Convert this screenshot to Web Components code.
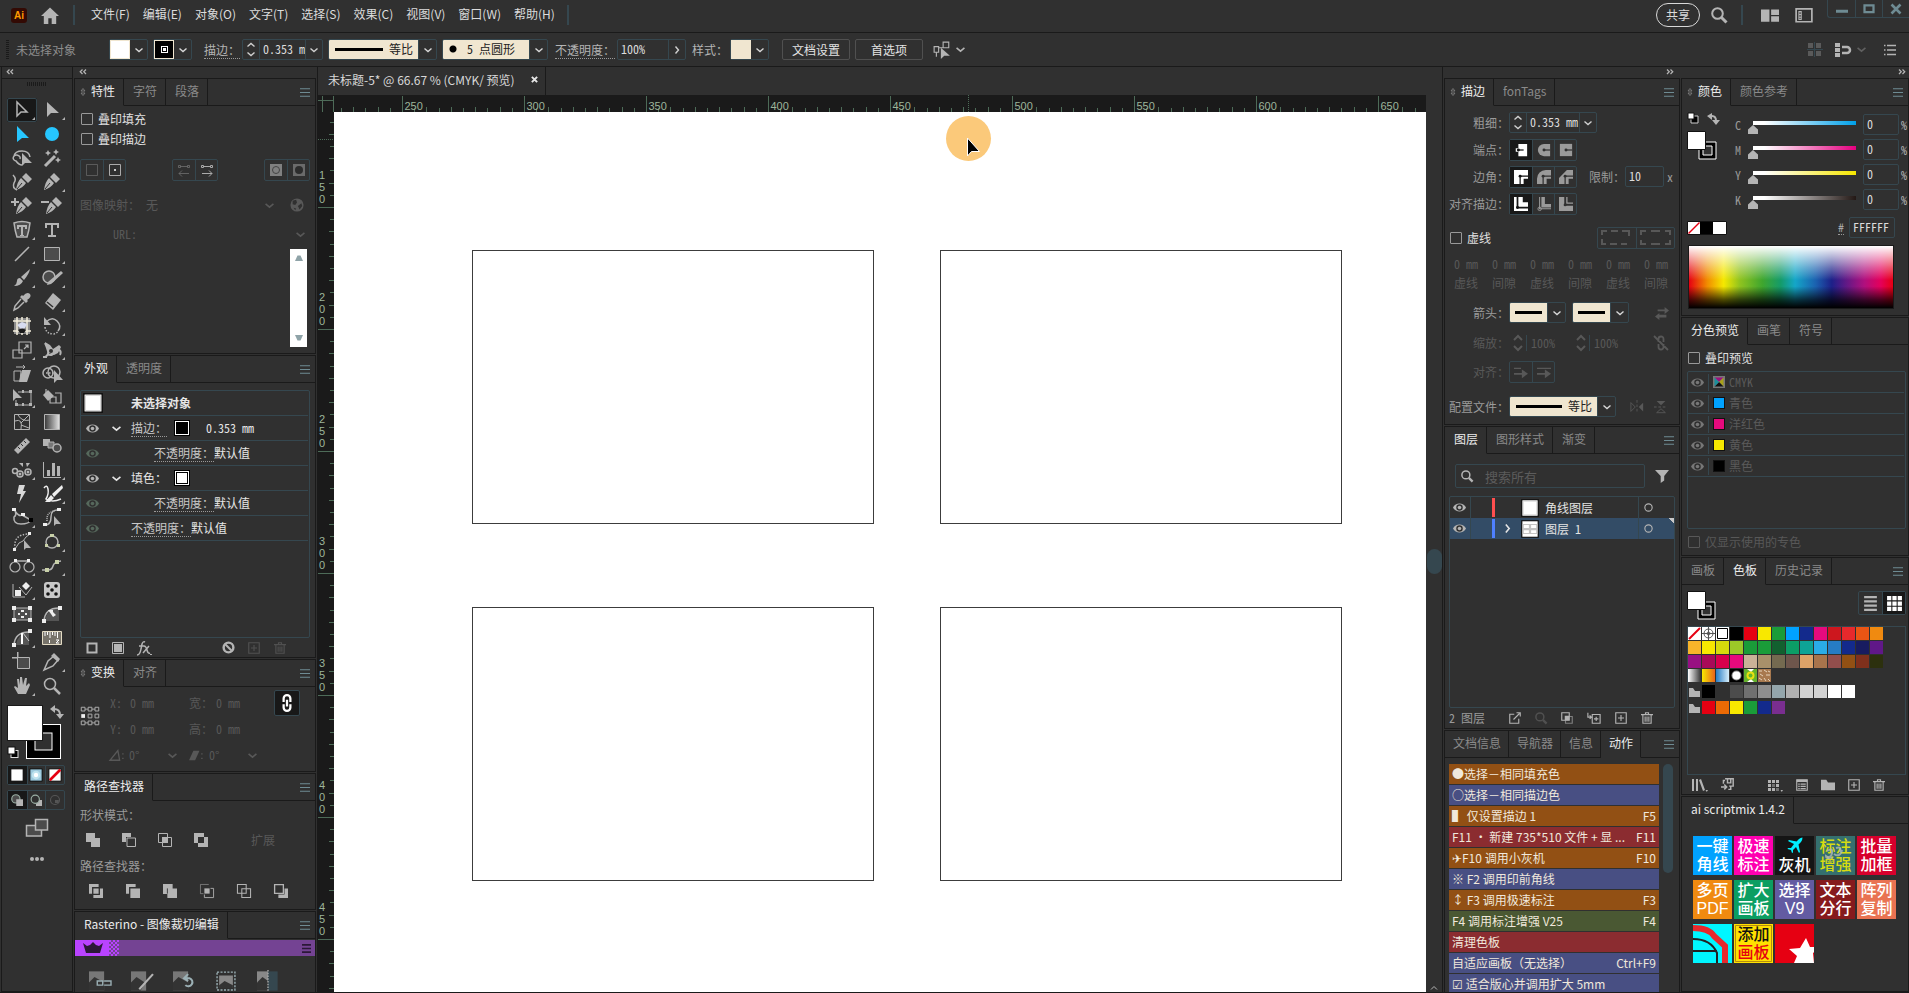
<!DOCTYPE html>
<html lang="zh-CN">
<head>
<meta charset="utf-8">
<title>未标题-5* @ 66.67 % (CMYK/ 预览)</title>
<style>
  html, body {
    margin: 0;
    height: 100%;
    overflow: hidden;
  }

  body {
    --bg: #303030;
    --dark: #1a1a1a;
    --line: #35474f;
    --cream: #f0e6d0;
    --mono: "Noto Sans Mono CJK SC", "Noto Sans CJK SC", monospace;
    background: var(--bg);
    color: #b4b4b4;
    font: 12px/20px "Noto Sans CJK SC", sans-serif;
  }
</style>
</head>
<body>

<template id="app-window-template">
  <style>
    :host {
      display: flex;
      flex-direction: column;
      height: 100vh;
    }

    main {
      flex: 1;
      display: flex;
      gap: 1px;
      min-height: 0;
      padding-left: 1px;
      border-bottom: 1px solid var(--dark);
    }

    document-view {
      flex: 1;
    }
  </style>
  <menu-bar></menu-bar>
  <options-bar></options-bar>
  <main>
    <tool-box></tool-box>
    <left-dock></left-dock>
    <document-view></document-view>
    <stroke-dock></stroke-dock>
    <color-dock></color-dock>
  </main>
</template>

<template id="menu-bar-template">
  <style>
    :host {
      display: flex;
      align-items: flex-start;
      height: 32px;
      border-bottom: 1px solid var(--dark);
      padding-left: 11px;
    }

    .logo {
      width: 16px;
      height: 15px;
      margin: 8px 14px 0 0;
      border-radius: 3px;
      background: #330a04;
      color: #ff9a00;
      font: bold 10px/15px "Liberation Sans", sans-serif;
      text-align: center;
    }

    .rule {
      width: 2px;
      height: 20px;
      margin-top: 5px;
      background: var(--line);
    }

    nav {
      display: flex;
      gap: 13px;
      margin: 4px 12px 0 16px;
    }

    button {
      background: none;
      border: 0;
      padding: 0;
      color: #dcdcdc;
      font: inherit;
      white-space: nowrap;
    }

    .home {
      margin: 7px 14px 0 0;
      height: 18px;
      color: #b4b4b4;
      line-height: 0;
    }

    .right {
      display: flex;
      align-items: flex-start;
      margin-left: auto;
    }

    .share {
      width: 44px;
      height: 24px;
      margin: 3px 11px 0 0;
      border: 1px solid #d8d8d8;
      border-radius: 12px;
    }

    .right .tool {
      height: 18px;
      margin-top: 6px;
      color: #b4b4b4;
      line-height: 0;
    }

    .controls {
      display: flex;
      border: 1px solid var(--line);
      border-width: 0 0 1px 1px;
      border-radius: 0 0 0 3px;
      margin-left: 14px;
    }

    .controls button {
      width: 27px;
      height: 17px;
      color: #6e8b93;
      line-height: 0;
    }

    .controls button + button {
      border-left: 1px solid var(--line);
    }
  </style>
  <span class="logo">Ai</span>
  <button class="home" aria-label="主页"><ui-icon name="home" size="18"></ui-icon></button>
  <span class="rule"></span>
  <nav>
    <button>文件(F)</button>
    <button>编辑(E)</button>
    <button>对象(O)</button>
    <button>文字(T)</button>
    <button>选择(S)</button>
    <button>效果(C)</button>
    <button>视图(V)</button>
    <button>窗口(W)</button>
    <button>帮助(H)</button>
  </nav>
  <span class="rule"></span>
  <div class="right">
    <button class="share">共享</button>
    <button class="tool" aria-label="搜索"><ui-icon name="search" size="16"></ui-icon></button>
    <span class="rule" style="margin-left: 14px; margin-right: 18px"></span>
    <button class="tool" aria-label="排列文档"><ui-icon name="arrange" size="18"></ui-icon></button>
    <button class="tool" aria-label="工作区" style="margin-left: 16px"><ui-icon name="workspace" size="18"></ui-icon></button>
    <div class="controls">
      <button aria-label="最小化"><ui-icon name="minimise" size="12"></ui-icon></button>
      <button aria-label="最大化"><ui-icon name="maximise" size="12"></ui-icon></button>
      <button aria-label="关闭"><ui-icon name="close" size="12"></ui-icon></button>
    </div>
  </div>
</template>

<template id="options-bar-template">
  <style>
    :host {
      display: flex;
      align-items: center;
      height: 33px;
      padding: 0 13px 0 6px;
      border-bottom: 1px solid var(--dark);
      white-space: nowrap;
    }

    .grip {
      width: 3px;
      height: 20px;
      margin-right: 7px;
      background: repeating-linear-gradient(#1a1a1a 0 1px, transparent 1px 2px);
    }

    .state {
      width: 93px;
      color: #8c8c8c;
    }

    .label {
      line-height: 17px;
      margin: 0 2px 0 13px;
      font-family: var(--mono);
    }

    .label.dotted {
      border-bottom: 1px dotted #999;
    }

    pick-list, num-box, .btn {
      margin-right: 5px;
    }

    .btn {
      width: 68px;
      height: 21px;
      padding: 0;
      border: 1px solid #505050;
      border-radius: 2px;
      background: none;
      color: #e4e4e4;
      font: inherit;
      line-height: 18px;
    }

    .right {
      display: flex;
      align-items: center;
      margin-left: auto;
    }
  </style>
  <span class="grip"></span>
  <span class="state">未选择对象</span>
  <swatch-button color="#fff"></swatch-button>
  <swatch-button color="#000" ring></swatch-button>
  <span class="label dotted" style="margin-left: 7px">描边：</span>
  <num-box value="0.353 mm" label="描边粗细" spin drop style="width: 81px"></num-box>
  <pick-list value="等比" label="变量宽度配置文件" kind="line" style="width: 109px"></pick-list>
  <pick-list value="5 点圆形" label="画笔定义" kind="dot" style="width: 106px"></pick-list>
  <span class="label dotted" style="margin-left: 2px">不透明度：</span>
  <num-box value="100%" label="不透明度" next style="width: 69px"></num-box>
  <span class="label" style="margin-left: 1px">样式：</span>
  <swatch-button color="#f0e6d0"></swatch-button>
  <button class="btn" style="margin-left: 8px">文档设置</button>
  <button class="btn">首选项</button>
  <ui-icon name="select-similar" size="18" style="margin-left: 5px"></ui-icon>
  <ui-icon name="chevron" size="9" style="margin-left: 5px"></ui-icon>
  <div class="right">
    <ui-icon name="grid-snap" size="16" style="color: #5a5a5a; margin-right: 12px"></ui-icon>
    <ui-icon name="magnet" size="16"></ui-icon>
    <ui-icon name="chevron" size="9" style="color: #606060; margin: 0 18px 0 6px"></ui-icon>
    <ui-icon name="list" size="12"></ui-icon>
  </div>
</template>

<template id="tool-box-template">
  <style>
    :host {
      box-sizing: border-box;
      width: 72px;
      border: 1px solid var(--dark);
      border-top: 0;
    }

    .strip {
      display: block;
      height: 11px;
      border-bottom: 1px solid var(--dark);
      padding-left: 4px;
      line-height: 0;
    }

    .grip {
      width: 20px;
      height: 4px;
      margin: 3px auto 12px 25px;
      background: repeating-linear-gradient(90deg, #1a1a1a 0 1px, transparent 1px 2px);
    }

    .tools {
      display: grid;
      grid-template-columns: 30px 30px;
      margin-left: 5px;
    }

    button {
      padding: 0;
      border: 0;
      background: none;
      color: #b4b4b4;
      line-height: 0;
    }

    .tools button {
      box-sizing: border-box;
      height: 24px;
    }

    .tools .on {
      background: #181818;
      outline: 1px solid var(--line);
      outline-offset: -1px;
      border-radius: 2px;
    }

    .tools svg {
      width: 30px;
      height: 24px;
      fill: currentColor;
    }

    .s {
      fill: none;
      stroke: currentColor;
      stroke-width: 1.5;
    }

    .proxy {
      display: block;
      margin: 7px 0 6px 5px;
    }

    .modes {
      display: grid;
      grid-template-columns: repeat(3, 1fr);
      width: 56px;
      margin: 0 0 5px 5px;
      border: 1px solid var(--line);
      border-radius: 2px;
    }

    .modes button {
      height: 18px;
    }

    .modes button + button {
      border-left: 1px solid var(--line);
    }

    .modes .on {
      background: #181818;
    }

    .foot {
      display: flex;
      flex-direction: column;
      align-items: center;
      gap: 12px;
    }
  </style>
  <span class="strip"><ui-icon name="collapse-left" size="8"></ui-icon></span>
  <div class="grip"></div>
  <div class="tools"></div>
  <svg class="proxy" width="60" height="54" viewBox="0 0 60 54">
    <rect x="19.500" y="19.500" width="34" height="34" fill="#000" stroke="#fff"/>
    <rect x="28" y="28" width="17" height="17" fill="#303030" stroke="#fff"/>
    <rect x=".5" y=".5" width="35" height="35" fill="#fff" stroke="#1a1a1a"/>
    <path d="M47 4q6 0 6 6" fill="none" stroke="#b4b4b4" stroke-width="2"/>
    <path d="M43 4l5-4v8zM49 9h8l-4 5z" fill="#b4b4b4"/>
    <rect x="4" y="45.500" width="7" height="7" fill="#000" stroke="#ddd"/>
    <rect x="1" y="42" width="7" height="7" fill="#fff" stroke="#111"/>
  </svg>
  <div class="modes">
    <button class="on" aria-label="颜色"><ui-icon name="sw-white" size="14"></ui-icon></button>
    <button aria-label="渐变"><ui-icon name="sw-gradient" size="14"></ui-icon></button>
    <button aria-label="无"><ui-icon name="sw-none" size="14"></ui-icon></button>
  </div>
  <div class="modes">
    <button class="on" aria-label="正常绘图"><ui-icon name="draw-normal" size="12"></ui-icon></button>
    <button aria-label="背面绘图"><ui-icon name="draw-behind" size="12"></ui-icon></button>
    <button aria-label="内部绘图" style="color: #555"><ui-icon name="draw-inside" size="12"></ui-icon></button>
  </div>
  <div class="foot">
    <button aria-label="屏幕模式"><ui-icon name="screens" size="24"></ui-icon></button>
    <button aria-label="更多工具"><ui-icon name="dots" size="16"></ui-icon></button>
  </div>
</template>

<template id="left-dock-template">
  <style>
    :host {
      display: flex;
      flex-direction: column;
      gap: 1px;
      width: 242px;
      overflow: hidden;
    }

    .strip {
      flex: none;
      height: 10px;
      padding-left: 5px;
      line-height: 0;
    }

    .row {
      display: flex;
      align-items: center;
      white-space: nowrap;
      font-family: var(--mono);
    }

    .off {
      color: #585858;
    }

    .attributes {
      padding: 3px 5px 6px;
    }

    .textbox {
      box-sizing: border-box;
      width: 17px;
      height: 98px;
      margin: 5px 3px 0 auto;
      padding: 5px 0;
      background: #fff;
      display: flex;
      flex-direction: column;
      align-items: center;
      justify-content: space-between;
      color: #8fa3a8;
      line-height: 0;
    }

    .appearance {
      padding: 7px 5px 0;
    }

    .list {
      height: 246px;
      border: 1px solid var(--line);
      border-radius: 2px;
    }

    .list .row {
      height: 24px;
      margin-right: 1px;
      border-bottom: 1px solid var(--line);
      padding-left: 5px;
      color: #e6e6e6;
    }

    .list .eye {
      width: 26px;
      color: #b4b4b4;
      line-height: 0;
    }

    .list .eye.faint {
      color: #56685c;
    }

    .list .arrow {
      width: 19px;
      line-height: 0;
    }

    .list .link {
      border-bottom: 1px dotted #999;
      line-height: 16px;
      color: #c8c8c8;
    }

    .chip {
      width: 10px;
      height: 10px;
      margin-left: 9px;
      border: 1px solid #000;
      background: #000;
      box-shadow: 0 0 0 1px #fff, 0 0 0 2px #000;
    }

    .foot {
      height: 19px;
      display: grid;
      grid-template-columns: 26px 26px 1fr 26px 26px 36px;
      align-items: center;
      padding-left: 4px;
    }

    .transform {
      display: grid;
      grid-template-columns: 30px 79px 1fr 36px;
      grid-template-rows: repeat(3, 26px);
      padding: 3px 5px;
      align-items: center;
      font-family: var(--mono);
      color: #585858;
    }

    .transform .ref {
      grid-row: 1 / 3;
      line-height: 0;
    }

    .transform .lock {
      grid-column: 4;
      grid-row: 1 / 2;
      box-sizing: border-box;
      width: 26px;
      height: 26px;
      padding: 0;
      border: 1px solid var(--line);
      border-radius: 2px;
      background: #181818;
      color: #fff;
      line-height: 0;
    }

    .pair {
      display: flex;
      align-items: center;
      white-space: nowrap;
    }

    .pair label {
      display: inline-block;
      width: 20px;
    }

    .pair.wide label {
      width: 27px;
    }

    .pair input {
      width: 36px;
      padding: 0;
      border: 0;
      background: none;
      color: inherit;
      font: inherit;
    }

    .pathfinder {
      padding: 4px 5px 6px;
      color: #9a9a9a;
    }

    .pathfinder .shapes {
      display: flex;
      align-items: center;
      height: 24px;
      margin: 3px 0 4px;
      color: #b4b4b4;
    }

    .bar {
      display: flex;
      align-items: center;
      justify-content: space-between;
      height: 16px;
      margin-top: 1px;
      padding: 0 4px 0 8px;
      color: #2b1838;
      background:
        linear-gradient(90deg, #b943ff 34px, transparent 34px 44px, #744393 44px),
        repeating-conic-gradient(#b943ff 0 25%, #744393 0 50%) 0 0 / 4px 4px;
      line-height: 0;
    }

    .images {
      display: flex;
      gap: 20px;
      padding: 14px 14px 0;
    }
  </style>
  <div class="strip"><ui-icon name="collapse-left" size="8"></ui-icon></div>
  <dock-panel tabs="特性,字符,段落" active="0" toggle menu>
    <div class="attributes">
      <check-field>叠印填充</check-field>
      <check-field>叠印描边</check-field>
      <div class="row" style="justify-content: space-between; margin-top: 10px">
        <icon-group icons="box-empty,box-dot" size="16" cell="22" style="color: #777"></icon-group>
        <icon-group icons="dir-left,dir-right" size="16" cell="22" style="color: #777"></icon-group>
        <icon-group icons="rule-out,rule-in" size="16" cell="22" style="color: #777"></icon-group>
      </div>
      <div class="row off" style="height: 20px; margin-top: 14px">
        <span style="flex: 1">图像映射： 无</span>
        <ui-icon name="chevron" size="9" style="margin-right: 16px"></ui-icon>
        <ui-icon name="globe" size="14" style="margin-right: 6px"></ui-icon>
      </div>
      <div class="row off" style="height: 20px; margin-top: 9px; padding-left: 33px">
        <span style="flex: 1">URL:</span>
        <ui-icon name="chevron" size="9" style="margin-right: 5px"></ui-icon>
      </div>
      <div class="textbox">
        <ui-icon name="tri-up" size="8"></ui-icon>
        <ui-icon name="tri-down" size="8"></ui-icon>
      </div>
    </div>
  </dock-panel>
  <dock-panel tabs="外观,透明度" active="0" menu>
    <div class="appearance">
      <div class="list">
        <div class="row" style="padding-left: 2px"><ui-icon name="thumb" size="20"></ui-icon><b style="margin-left: 28px">未选择对象</b></div>
        <div class="row"><span class="eye"><ui-icon name="eye" size="13"></ui-icon></span><span class="arrow"><ui-icon name="chevron" size="9"></ui-icon></span><span class="link">描边：</span><span class="chip"></span><span style="margin-left: 18px">0.353 mm</span></div>
        <div class="row"><span class="eye faint"><ui-icon name="eye" size="13"></ui-icon></span><span class="link" style="margin-left: 42px">不透明度：</span><span>默认值</span></div>
        <div class="row"><span class="eye"><ui-icon name="eye" size="13"></ui-icon></span><span class="arrow"><ui-icon name="chevron" size="9"></ui-icon></span><span>填色：</span><span class="chip" style="background: #fff"></span></div>
        <div class="row"><span class="eye faint"><ui-icon name="eye" size="13"></ui-icon></span><span class="link" style="margin-left: 42px">不透明度：</span><span>默认值</span></div>
        <div class="row"><span class="eye faint"><ui-icon name="eye" size="13"></ui-icon></span><span class="link" style="margin-left: 19px">不透明度：</span><span>默认值</span></div>
      </div>
      <div class="foot">
        <ui-icon name="box-thick" size="16"></ui-icon>
        <ui-icon name="box-fill" size="16"></ui-icon>
        <ui-icon name="fx" size="16"></ui-icon>
        <ui-icon name="clear" size="13"></ui-icon>
        <ui-icon name="plus-box" size="12" style="color: #505050"></ui-icon>
        <ui-icon name="trash" size="12" style="color: #505050"></ui-icon>
      </div>
    </div>
  </dock-panel>
  <dock-panel tabs="变换,对齐" active="0" toggle menu>
    <div class="transform">
      <span class="ref"><ui-icon name="ref-point" size="20"></ui-icon></span>
      <div class="pair"><label for="x">X:</label><input id="x" value="0 mm"></div>
      <div class="pair wide"><label for="w">宽：</label><input id="w" value="0 mm"></div>
      <button class="lock" aria-label="约束比例"><ui-icon name="link" size="18"></ui-icon></button>
      <div class="pair"><label for="y">Y:</label><input id="y" value="0 mm"></div>
      <div class="pair wide"><label for="h">高：</label><input id="h" value="0 mm"></div>
      <span></span><span></span>
      <div class="pair"><ui-icon name="angle" size="14"></ui-icon><span style="width: 39px; margin-left: 5px">0°</span><ui-icon name="chevron" size="9"></ui-icon></div>
      <div class="pair"><ui-icon name="shear" size="14"></ui-icon><span style="width: 39px; margin-left: 6px">0°</span><ui-icon name="chevron" size="9"></ui-icon></div>
    </div>
  </dock-panel>
  <dock-panel tabs="路径查找器" active="0" menu>
    <div class="pathfinder">
      <div>形状模式：</div>
      <div class="shapes" style="gap: 20px; padding-left: 5px">
        <ui-icon name="pf-unite" size="16"></ui-icon>
        <ui-icon name="pf-minus" size="16"></ui-icon>
        <ui-icon name="pf-intersect" size="16"></ui-icon>
        <ui-icon name="pf-exclude" size="16"></ui-icon>
        <span style="margin-left: 22px; color: #585858">扩展</span>
      </div>
      <div>路径查找器：</div>
      <div class="shapes" style="gap: 23px; margin-bottom: 0; padding-left: 9px">
        <ui-icon name="pf-divide" size="14"></ui-icon>
        <ui-icon name="pf-trim" size="14"></ui-icon>
        <ui-icon name="pf-merge" size="14"></ui-icon>
        <ui-icon name="pf-crop" size="14"></ui-icon>
        <ui-icon name="pf-outline" size="14"></ui-icon>
        <ui-icon name="pf-back" size="14"></ui-icon>
      </div>
    </div>
  </dock-panel>
  <dock-panel tabs="Rasterino - 图像裁切编辑" active="0" menu style="flex: 1">
    <div class="bar">
      <ui-icon name="crown" size="20" tall="12"></ui-icon>
      <ui-icon name="bars" size="9"></ui-icon>
    </div>
    <div class="images">
      <ui-icon name="img-link" size="22"></ui-icon>
      <ui-icon name="img-edit" size="22"></ui-icon>
      <ui-icon name="img-turn" size="22"></ui-icon>
      <ui-icon name="img-crop" size="22"></ui-icon>
      <ui-icon name="img-split" size="22"></ui-icon>
    </div>
  </dock-panel>
</template>

<template id="document-view-template">
  <style>
    :host {
      display: flex;
      flex-direction: column;
      min-width: 0;
      border: 1px solid var(--dark);
      border-width: 0 1px;
    }

    .tab {
      display: flex;
      align-items: center;
      height: 28px;
      color: #d8d8d8;
    }

    .title {
      display: flex;
      align-items: center;
      gap: 16px;
      height: 100%;
      padding: 0 7px 3px 10px;
      box-sizing: border-box;
      border-right: 1px solid var(--dark);
      white-space: nowrap;
    }

    .title button {
      padding: 0;
      border: 0;
      background: none;
      color: #e6e6e6;
      line-height: 0;
    }

    .work {
      flex: 1;
      display: grid;
      grid-template-columns: 16px 1fr 16px;
      grid-template-rows: 17px 1fr;
      min-height: 0;
    }

    .corner {
      background: var(--dark);
      line-height: 0;
    }

    .page {
      position: relative;
      overflow: hidden;
      background: #fff;
    }

    .shape {
      position: absolute;
      box-sizing: border-box;
      width: 402px;
      height: 274px;
      border: 1px solid #3c3c3c;
    }

    .pointer {
      position: absolute;
      left: 612px;
      top: 4px;
    }

    .scroll {
      display: flex;
      flex-direction: column;
      align-items: center;
      justify-content: space-between;
      line-height: 0;
    }

    .thumb {
      width: 15px;
      height: 25px;
      margin-top: 437px;
      border-radius: 8px;
      background: var(--line);
    }
  </style>
  <div class="tab">
    <div class="title">未标题-5* @ 66.67 % (CMYK/ 预览)
      <button aria-label="关闭文档"><ui-icon name="x" size="7"></ui-icon></button>
    </div>
  </div>
  <div class="work">
    <svg class="corner" width="16" height="17" stroke="#4d6b58" fill="none"><path d="M0 5.500H16M4.500 1V17M15.500 1V17"/></svg>
    <ruler-strip axis="x" start="250" offset="68" mark="634"></ruler-strip>
    <span></span>
    <ruler-strip axis="y" start="150" offset="95" mark="27"></ruler-strip>
    <div class="page">
      <div class="shape" style="left: 138px; top: 138px"></div>
      <div class="shape" style="left: 606px; top: 138px"></div>
      <div class="shape" style="left: 138px; top: 495px"></div>
      <div class="shape" style="left: 606px; top: 495px"></div>
      <svg class="pointer" width="46" height="46">
        <circle cx="22.500" cy="22.500" r="22.500" fill="#fbc97a"/>
        <path d="M21.500 22v18l4-4.500h8z" fill="#000" stroke="#fff"/>
      </svg>
    </div>
    <div class="scroll">
      <span class="thumb"></span>
      <ui-icon name="chevron-up" size="8"></ui-icon>
    </div>
  </div>
</template>

<template id="stroke-dock-template">
  <style>
    :host {
      display: flex;
      flex-direction: column;
      gap: 1px;
      width: 236px;
      overflow: hidden;
    }

    .strip {
      flex: none;
      height: 10px;
      padding-right: 6px;
      text-align: right;
      line-height: 0;
    }

    .stroke {
      display: flex;
      flex-direction: column;
      gap: 6px;
      padding: 6px 4px 7px;
      font-family: var(--mono);
      color: #9a9a9a;
    }

    .row {
      display: flex;
      align-items: center;
      height: 21px;
      white-space: nowrap;
    }

    .row .name {
      width: 60px;
      text-align: right;
    }

    .off {
      color: #585858;
    }

    .dashes {
      display: grid;
      grid-template-columns: repeat(6, 38px);
      padding-left: 5px;
      line-height: 19px;
      color: #585858;
    }

    .layers {
      padding: 10px 4px 0;
    }

    .search {
      display: flex;
      align-items: center;
      margin: 0 6px 8px 6px;
    }

    .search label {
      flex: 1;
      display: flex;
      align-items: center;
      gap: 12px;
      box-sizing: border-box;
      height: 24px;
      margin-right: 10px;
      padding-left: 5px;
      border: 1px solid var(--line);
      border-radius: 2px;
    }

    .search input {
      width: 120px;
      padding: 0;
      border: 0;
      background: none;
      font: 13px "Noto Sans CJK SC", sans-serif;
    }

    .search input::placeholder {
      color: #5c5c5c;
    }

    .list {
      height: 210px;
      border: 1px solid var(--line);
      border-radius: 2px;
    }

    .layer {
      display: grid;
      grid-template-columns: 20px 22px 6px 23px 24px 1fr 36px;
      align-items: center;
      height: 21px;
      color: #e4e4e4;
      font-family: var(--mono);
      line-height: 21px;
    }

    .layer > * {
      line-height: 0;
    }

    .layer .see {
      padding-left: 3px;
      color: #b4b4b4;
    }

    .layer .cell {
      align-self: stretch;
      border-left: 1px solid var(--line);
    }

    .layer .target {
      display: flex;
      align-items: center;
      padding-left: 5px;
      color: #b4b4b4;
    }

    .layer .name {
      line-height: 20px;
    }

    .layer .tint {
      width: 3px;
      height: 19px;
    }

    .layer.on {
      background: linear-gradient(225deg, #c8c8c8 4px, transparent 4px) #334c66;
    }

    .foot {
      display: flex;
      align-items: center;
      gap: 14px;
      height: 20px;
      color: #9a9a9a;
      font-family: var(--mono);
    }

    .foot ui-icon {
      color: #b4b4b4;
    }

    .actions {
      display: flex;
      align-items: flex-start;
      gap: 4px;
      padding: 6px 6px 0 4px;
    }

    .rows {
      flex: 1;
      display: grid;
      gap: 1px;
      min-width: 0;
    }

    .thumb {
      flex: none;
      width: 10px;
      height: 109px;
      border-radius: 5px;
      background: var(--line);
    }
  </style>
  <div class="strip"><ui-icon name="collapse-right" size="8"></ui-icon></div>
  <dock-panel tabs="描边,fonTags" active="0" toggle menu>
    <div class="stroke">
      <div class="row"><span class="name">粗细：</span><num-box value="0.353 mm" label="粗细" spin drop style="width: 88px"></num-box></div>
      <div class="row"><span class="name">端点：</span><icon-group icons="cap-butt,cap-round,cap-square" size="14" cell="22" on="0"></icon-group></div>
      <div class="row"><span class="name">边角：</span><icon-group icons="join-miter,join-round,join-bevel" size="14" cell="22" on="0"></icon-group><span style="margin-left: 12px">限制：</span><num-box value="10" label="限制" style="width: 39px"></num-box><span style="margin-left: 3px">x</span></div>
      <div class="row"><span class="name">对齐描边：</span><icon-group icons="al-center,al-inside,al-outside" size="14" cell="22" on="0"></icon-group></div>
      <div class="row" style="margin-top: 7px; justify-content: space-between"><check-field>虚线</check-field><icon-group icons="dash-a,dash-b" size="32" cell="38" style="color: #585858"></icon-group></div>
      <div class="dashes">
        <span>0 mm</span><span>0 mm</span><span>0 mm</span><span>0 mm</span><span>0 mm</span><span>0 mm</span>
        <span>虚线</span><span>间隙</span><span>虚线</span><span>间隙</span><span>虚线</span><span>间隙</span>
      </div>
      <div class="row" style="margin-top: 4px"><span class="name">箭头：</span><pick-list value="" label="起点箭头" kind="arrow" style="width: 57px; margin-right: 6px"></pick-list><pick-list value="" label="终点箭头" kind="arrow" style="width: 57px"></pick-list><ui-icon name="swap" size="14" style="color: #585858; margin-left: 26px"></ui-icon></div>
      <div class="row off" style="margin-top: 3px"><span class="name">缩放：</span><ui-icon name="spin" size="16" style="margin: 0 3px 0 3px"></ui-icon><span>100%</span><ui-icon name="spin" size="16" style="margin: 0 3px 0 20px"></ui-icon><span>100%</span><ui-icon name="unlink" size="16" style="margin-left: 35px"></ui-icon></div>
      <div class="row off" style="margin-top: 2px"><span class="name">对齐：</span><icon-group icons="tip-a,tip-b" size="14" cell="22"></icon-group></div>
      <div class="row" style="margin-top: 8px"><span class="name">配置文件：</span><pick-list value="等比" label="配置文件" kind="line" style="width: 107px"></pick-list><span class="off" style="display: flex; gap: 10px; margin-left: 14px"><ui-icon name="flip-h" size="14"></ui-icon><ui-icon name="flip-v" size="14"></ui-icon></span></div>
    </div>
  </dock-panel>
  <dock-panel tabs="图层,图形样式,渐变" active="0" menu>
    <div class="layers">
      <div class="search">
        <label><ui-icon name="search" size="12"></ui-icon><input placeholder="搜索所有" aria-label="搜索所有"></label>
        <ui-icon name="funnel" size="14"></ui-icon>
      </div>
      <div class="list">
        <div class="layer">
          <span class="see"><ui-icon name="eye" size="13"></ui-icon></span><span class="cell"></span>
          <span class="tint" style="background: #ff4f4f"></span><span></span>
          <span><ui-icon name="thumb" size="18"></ui-icon></span><span class="name">角线图层</span>
          <span class="cell target"><ui-icon name="ring" size="9"></ui-icon></span>
        </div>
        <div class="layer on">
          <span class="see"><ui-icon name="eye" size="13"></ui-icon></span><span class="cell"></span>
          <span class="tint" style="background: #4f80ff"></span><span style="padding-left: 5px"><ui-icon name="chevron-right" size="9"></ui-icon></span>
          <span><ui-icon name="thumb-art" size="18"></ui-icon></span><span class="name">图层 1</span>
          <span class="cell target"><ui-icon name="ring" size="9"></ui-icon></span>
        </div>
      </div>
      <div class="foot">
        <span style="width: 46px">2 图层</span>
        <ui-icon name="export" size="12"></ui-icon>
        <ui-icon name="search" size="12" style="color: #505050"></ui-icon>
        <ui-icon name="clip" size="12"></ui-icon>
        <ui-icon name="sublayer" size="14"></ui-icon>
        <ui-icon name="plus-box" size="12"></ui-icon>
        <ui-icon name="trash" size="12"></ui-icon>
      </div>
    </div>
  </dock-panel>
  <dock-panel tabs="文档信息,导航器,信息,动作" active="3" tight menu style="flex: 1">
    <div class="actions">
      <div class="rows">
        <action-row tone="orange">●选择－相同填充色</action-row>
        <action-row tone="blue">○选择－相同描边色</action-row>
        <action-row tone="orange" key="F5">▌ 仅设置描边 1</action-row>
        <action-row tone="red" key="F11">F11 • 新建 735*510 文件 + 显 ...</action-row>
        <action-row tone="orange" key="F10">✈F10 调用小灰机</action-row>
        <action-row tone="blue">※ F2 调用印前角线</action-row>
        <action-row tone="orange" key="F3">↕ F3 调用极速标注</action-row>
        <action-row tone="green" key="F4">F4 调用标注增强 V25</action-row>
        <action-row tone="red">清理色板</action-row>
        <action-row tone="blue" key="Ctrl+F9">自适应画板（无选择）</action-row>
        <action-row tone="blue">☑ 适合版心并调用扩大 5mm</action-row>
      </div>
      <span class="thumb"></span>
    </div>
  </dock-panel>
</template>

<template id="color-dock-template">
  <style>
    :host {
      display: flex;
      flex-direction: column;
      gap: 1px;
      width: 228px;
      overflow: hidden;
    }

    .strip {
      flex: none;
      height: 10px;
      padding-right: 3px;
      text-align: right;
      line-height: 0;
    }

    .color {
      padding: 6px 0 6px 5px;
      font-family: var(--mono);
    }

    .mix {
      display: flex;
    }

    .sliders {
      flex: 1;
      min-width: 0;
      padding: 0 1px 0 16px;
    }

    .hex {
      display: flex;
      align-items: center;
      height: 21px;
      margin: 5px 13px 7px 0;
    }

    .hex .chips {
      flex: 1;
      line-height: 0;
    }

    .hex label {
      margin-right: 5px;
      border-bottom: 1px dotted #999;
      line-height: 14px;
    }

    .spectrum {
      height: 62px;
      margin: 0 14px 0 1px;
      border: 1px solid var(--dark);
      background:
        linear-gradient(#fff 0, #fffc 10%, #fff5 35%, #fff0 55%, #0000 65%, #000a 86%, #000 100%),
        linear-gradient(90deg, #e60012 0, #f18d00 9%, #f5e800 17%, #8fc31f 25%, #3fa62e 36%, #149b6a 45%, #14a6c8 52%, #1b62b0 62%, #1d2088 70%, #601986 77%, #b0107e 86%, #e5005a 94%, #e60012 100%);
    }

    .separations {
      padding: 3px 2px 3px 5px;
    }

    .sep-list {
      height: 156px;
      margin: 3px 0;
      border: 1px solid var(--line);
      border-radius: 2px;
    }

    .ink {
      display: flex;
      align-items: center;
      height: 20px;
      margin-right: 1px;
      padding-left: 3px;
      border-bottom: 1px solid var(--line);
      color: #5a5a5a;
      font-family: var(--mono);
    }

    .ink .eye {
      display: flex;
      align-items: center;
      width: 17px;
      height: 17px;
      margin-right: 4px;
      border-right: 1px solid var(--line);
      color: #777;
    }

    .ink i {
      width: 10px;
      height: 10px;
      margin-right: 4px;
      border: 1px solid #111;
    }

    .swatches {
      padding: 6px 2px 0 5px;
    }

    .top {
      display: flex;
      justify-content: space-between;
      height: 35px;
      align-items: flex-start;
    }

    .well {
      height: 147px;
      border: 1px solid var(--line);
      line-height: 0;
    }

    .foot {
      display: flex;
      align-items: center;
      gap: 13px;
      height: 19px;
      padding-left: 5px;
    }

    .scripts {
      display: grid;
      grid-template-columns: repeat(5, 39px);
      gap: 5px 2px;
      padding: 12px 0 0 11px;
    }
  </style>
  <div class="strip"><ui-icon name="collapse-right" size="8"></ui-icon></div>
  <dock-panel tabs="颜色,颜色参考" active="0" toggle menu>
    <div class="color">
      <div class="mix">
        <ui-icon name="proxy" size="32" tall="48"></ui-icon>
        <div class="sliders">
          <ink-slider name="C" tone="#00a0e9"></ink-slider>
          <ink-slider name="M" tone="#e4007f"></ink-slider>
          <ink-slider name="Y" tone="#f5e600"></ink-slider>
          <ink-slider name="K" tone="#231815"></ink-slider>
        </div>
      </div>
      <div class="hex">
        <span class="chips"><svg width="40" height="14"><path d="M.5.5h39v13h-39z" fill="#fff" stroke="#111"/><path d="M13 1h13v12h-13z"/><path d="M1.500 12.500l11-11" stroke="#e60012" stroke-width="1.500"/></svg></span>
        <label>#</label>
        <num-box value="FFFFFF" label="十六进制" style="width: 46px"></num-box>
      </div>
      <div class="spectrum"></div>
    </div>
  </dock-panel>
  <dock-panel tabs="分色预览,画笔,符号" active="0">
    <div class="separations">
      <check-field>叠印预览</check-field>
      <div class="sep-list">
        <div class="ink"><span class="eye"><ui-icon name="eye" size="13"></ui-icon></span><ui-icon name="cmyk" size="12" style="margin-right: 4px"></ui-icon>CMYK</div>
        <div class="ink"><span class="eye"><ui-icon name="eye" size="13"></ui-icon></span><i style="background: #00a2ff"></i>青色</div>
        <div class="ink"><span class="eye"><ui-icon name="eye" size="13"></ui-icon></span><i style="background: #e60a7d"></i>洋红色</div>
        <div class="ink"><span class="eye"><ui-icon name="eye" size="13"></ui-icon></span><i style="background: #f7e800"></i>黄色</div>
        <div class="ink"><span class="eye"><ui-icon name="eye" size="13"></ui-icon></span><i style="background: #000"></i>黑色</div>
      </div>
      <check-field disabled>仅显示使用的专色</check-field>
    </div>
  </dock-panel>
  <dock-panel tabs="画板,色板,历史记录" active="1" menu>
    <div class="swatches">
      <div class="top">
        <ui-icon name="proxy-small" size="32"></ui-icon>
        <icon-group icons="rows,tiles" size="17" cell="23" on="1"></icon-group>
      </div>
      <div class="well"><swatch-well></swatch-well></div>
      <div class="foot">
        <ui-icon name="library" size="16"></ui-icon>
        <ui-icon name="add-library" size="13"></ui-icon>
        <ui-icon name="kinds" size="16" style="margin-left: 20px"></ui-icon>
        <ui-icon name="options" size="12"></ui-icon>
        <ui-icon name="folder" size="14"></ui-icon>
        <ui-icon name="plus-box" size="12"></ui-icon>
        <ui-icon name="trash" size="12"></ui-icon>
      </div>
    </div>
  </dock-panel>
  <dock-panel tabs="ai scriptmix 1.4.2" active="0" style="flex: 1">
    <div class="scripts">
      <script-tile style="--tile: #00a2ff">一键<br>角线</script-tile>
      <script-tile style="--tile: #ff00b0">极速<br>标注</script-tile>
      <script-tile style="--tile: #151515"><ui-icon name="plane" size="16" style="color: #00f0ff"></ui-icon><br>灰机</script-tile>
      <script-tile art="swirl" style="--tile: #35706f; --ink: #d8dc10">标注<br>增强</script-tile>
      <script-tile style="--tile: #d7002c">批量<br>加框</script-tile>
      <script-tile style="--tile: #f08a10">多页<br>PDF</script-tile>
      <script-tile style="--tile: #0c9e62">扩大<br>画板</script-tile>
      <script-tile style="--tile: #635ba2">选择<br>V9</script-tile>
      <script-tile style="--tile: #861a1d">文本<br>分行</script-tile>
      <script-tile style="--tile: #e97352">阵列<br>复制</script-tile>
      <script-tile art="arcs" style="--tile: #00f6ff"></script-tile>
      <script-tile art="frame" style="--tile: #ffe000; --ink: #111">添加<br><span style="color: #e60012">画板</span></script-tile>
      <script-tile art="star" style="--tile: #e60012"></script-tile>
    </div>
  </dock-panel>
</template>

<template id="dock-panel-template">
  <style>
    :host {
      display: block;
      border: 1px solid var(--dark);
    }

    .tabs {
      display: flex;
      height: 27px;
    }

    button {
      box-sizing: border-box;
      padding: 0 8px 3px 9px;
      border: 0;
      border-right: 1px solid var(--dark);
      border-bottom: 1px solid var(--dark);
      background: none;
      color: #8a8a8a;
      font: inherit;
      line-height: 20px;
      white-space: nowrap;
    }

    :host([tight]) button {
      padding: 0 7px 3px 8px;
    }

    button.on {
      border-bottom-color: transparent;
      color: #ececec;
    }

    button.toggle {
      padding: 0 8px 3px 4px;
    }

    .rest {
      flex: 1;
      display: flex;
      align-items: center;
      justify-content: flex-end;
      border-bottom: 1px solid var(--dark);
      padding: 0 5px 0 0;
      color: #6e8b93;
    }

    button ui-icon {
      color: #8a8a8a;
      margin-right: 4px;
    }
  </style>
  <div class="tabs"></div>
  <slot></slot>
</template>

<script>
  // Glyphs on a 16 x 16 grid unless BOXES says otherwise.
  // Class "s" marks an outline in the current colour.
  const ICONS = {
    "home": '<path d="M8 .5 0 8h2.500v7H6.500v-5h3v5H13.500V8H16z"/>',
    "search": '<circle class="s" cx="6.500" cy="6.500" r="5.300" style="stroke-width:2"/><path class="s" d="M10.500 10.500l5 5" style="stroke-width:3"/>',
    "arrange": '<path d="M0 3h7.500v11H0zM9 3h7v5H9zM9 9h7v5H9z"/>',
    "workspace": '<path class="s" d="M1 2.500h14v11.500H1z"/><path class="s" d="M3.500 5h2v7h-2z" style="stroke-width:1"/><path d="M3.500 7h2v1h-2zM3.500 9.500h2v1h-2z"/>',
    "minimise": '<path d="M0 9h16v4H0z"/>',
    "maximise": '<path class="s" d="M2 3h12v9H2z" style="stroke-width:3"/>',
    "close": '<path class="s" d="M2 2l12 12M14 2 2 14" style="stroke-width:3.500"/>',
    "x": '<path class="s" d="M2 2l12 12M14 2 2 14" style="stroke-width:4.500"/>',
    "chevron": '<path class="s" d="M1 5l7 6 7-6" style="stroke-width:2.800"/>',
    "chevron-right": '<path class="s" d="M5 1l6 7-6 7" style="stroke-width:2.800"/>',
    "chevron-up": '<path class="s" d="M2 11l6-6 6 6" style="stroke-width:2"/>',
    "spin": '<path class="s" d="M2 5l4-4 4 4M2 11l4 4 4-4" style="stroke-width:2"/><path d="M14 0h1v16h-1z" fill="#35474f"/>',
    "collapse-left": '<path class="s" d="M7 5 2.500 9.500 7 14M14 5 9.500 9.500 14 14" style="stroke-width:2.500"/>',
    "collapse-right": '<path class="s" d="M2 5l4.500 4.500L2 14M9 5l4.500 4.500L9 14" style="stroke-width:2.500"/>',
    "menu": '<path d="M0 2h16v1.600H0zM0 8h16v1.600H0zM0 14h16v1.600H0z"/>',
    "updown": '<path class="s" d="M4 6l4-5 4 5zM4 10l4 5 4-5z"/>',
    "select-similar": '<path class="s" d="M1 5h4v5H1zM9 1h5v5H9zM5 6h4M3 10v4" style="stroke-width:1"/><path d="M7 6v10l3-3h5z"/>',
    "grid-snap": '<path d="M1 1h5v5H1zM9 1h5v5H9zM1 9h5v5H1zM9 9h5v5H9z"/><path d="M0 7h16v1H0zM7 0h1v15H7z" fill="#35474f"/>',
    "magnet": '<path d="M0 1h5v4H0zM0 6h5v4H0zM0 11h5v4H0z"/><path class="s" d="M7 5h5a3 3 0 0 1 0 6H7" style="stroke-width:2.500"/>',
    "list": '<path d="M0 1h2v2H0zM4 1h12v2H4zM0 7h2v2H0zM4 7h12v2H4zM0 13h2v2H0zM4 13h12v2H4z"/>',
    "sw-white": '<path d="M1 1h14v14H1z" fill="#fff" stroke="#000"/>',
    "sw-gradient": '<path d="M1 1h14v14H1z" fill="#9cc9dd" stroke="#000"/><circle cx="8" cy="8" r="5" fill="#bfe3ee"/><circle cx="8" cy="8" r="2.500" fill="#fff"/>',
    "sw-none": '<path d="M1 1h14v14H1z" fill="#fff" stroke="#000"/><path d="M2 14 14 2" stroke="#e60012" stroke-width="3"/>',
    "draw-normal": '<circle cx="6.500" cy="6.500" r="5.500" fill="#4c4c4c" stroke="#9bb0a5" stroke-width="1.500"/><path d="M7 7h9v9H7z"/>',
    "draw-behind": '<path d="M8 8h8v8H8z"/><circle cx="7" cy="7" r="5.500" fill="#303030" stroke="#9bb0a5" stroke-width="1.500"/>',
    "draw-inside": '<circle class="s" cx="8" cy="8" r="6"/><path d="M8 8h5v4H8z"/>',
    "screens": '<path d="M1 7h10v7H1z" fill="#4c4c4c" stroke="#b4b4b4"/><path d="M7 3h8v7H7z" fill="#4c4c4c" stroke="#b4b4b4"/>',
    "dots": '<circle cx="3" cy="8" r="2"/><circle cx="8" cy="8" r="2"/><circle cx="13" cy="8" r="2"/>',
    "box-empty": '<path class="s" d="M2.500 2.500h11v11h-11z" style="stroke-width:1;opacity:.6"/>',
    "box-dot": '<path class="s" d="M2.500 2.500h11v11h-11z" style="stroke:#aaa;stroke-width:1"/><path d="M7 7h2v2H7z" fill="#ccc"/>',
    "dir-left": '<path class="s" d="M2.500 3.500h2v2h-2zM11.500 3.500h2v2h-2zM4.500 4.500h7M3 11.500h10M6 8.500l-3 3 3 3" style="stroke-width:1;opacity:.7"/>',
    "dir-right": '<path class="s" d="M2.500 3.500h2v2h-2zM11.500 3.500h2v2h-2zM4.500 4.500h7M3 11.500h10M10 8.500l3 3-3 3" style="stroke-width:1;stroke:#aaa"/>',
    "rule-out": '<path d="M2 2h12v12H2z" fill="#808080"/><circle cx="8" cy="8" r="3.500" fill="none" stroke="#444"/>',
    "rule-in": '<path d="M2 2h12v12H2z" fill="#6a6a6a"/><circle cx="8" cy="8" r="4" fill="#2c2c2c"/>',
    "globe": '<circle cx="8" cy="8" r="7.500"/><path d="M3 3l4-1 1 3-2 3-3-1zM9 9l4-3 1 3-3 4zM4 11l3 1-1 2z" fill="#303030"/>',
    "tri-up": '<path d="M0 14 5 3h6l5 11z"/>',
    "tri-down": '<path d="M0 2 5 13h6l5-11z"/>',
    "thumb": '<path d="M.7.7h14.600v14.600H.7z" fill="#fff" stroke="#000"/><path d="M2 2h12v12H2z" fill="none" stroke="#ccc" stroke-width=".6"/>',
    "thumb-art": '<path d="M.7.7h14.600v14.600H.7z" fill="#fff" stroke="#000"/><path d="M2 4h5.500v3.500H2zM8.500 4H14v3.500H8.500zM2 8.500h5.500V12H2zM8.500 8.500H14V12H8.500z" fill="none" stroke="#c4c4c4"/>',
    "eye": '<path d="M0 8C3 1.500 13 1.500 16 8 13 14.500 3 14.500 0 8z"/><circle cx="8" cy="8" r="4" fill="#303030"/><circle cx="8" cy="8" r="2.200"/>',
    "box-thick": '<path class="s" d="M3.500 3.500h9v9h-9z" style="stroke-width:2"/>',
    "box-fill": '<path class="s" d="M2.500 2.500h11v11h-11z" style="stroke-width:1"/><path d="M4 4h8v8H4z"/>',
    "fx": '<path class="s" d="M1 15q3 0 4-6l1-5q1-3 3-2M3 6h5M7 13l6-7M8 6q2 0 3 4t3 3"/><path d="M14 14h2v1h-2z"/>',
    "clear": '<circle class="s" cx="8" cy="8" r="6" style="stroke-width:3"/><path class="s" d="M4 4l8 8" style="stroke-width:2.500"/>',
    "plus-box": '<path class="s" d="M1 1h14v14H1zM8 4v8M4 8h8"/>',
    "trash": '<path class="s" d="M0 3.500h16M2.500 4v11h11V4M6 3V1h4v2M5.500 6v7M8 6v7M10.500 6v7"/>',
    "ref-point": '<path class="s" d="M1 1h3v3H1zM6.500 1h3v3h-3zM12 1h3v3h-3zM1 12h3v3H1zM6.500 12h3v3h-3zM12 12h3v3h-3zM6.500 6.500h3v3h-3zM12 6.500h3v3h-3zM4 2.500h2.500M9.500 2.500H12M4 13.500h2.500M9.500 13.500H12" style="stroke:#aaa;stroke-width:.8"/><path d="M1 6.500h3v3H1z" fill="#eee"/>',
    "link": '<path class="s" d="M5 7V4a3 3 0 0 1 6 0v3M5 9v3a3 3 0 0 0 6 0V9M8 5v6" style="stroke-width:2"/>',
    "unlink": '<path class="s" d="M5.500 7V4a2.500 2.500 0 0 1 5 0v3M5.500 9v3a2.500 2.500 0 0 0 5 0V9M1 1l14 14" style="stroke-width:1.800"/>',
    "angle": '<path class="s" d="M0 14h11L9 3z"/><path d="M14 6h1.500v1.500H14zM14 11h1.500v1.500H14z"/>',
    "shear": '<path d="M0 14 5 3h7L7 14zM14 6h1.500v1.500H14zM14 11h1.500v1.500H14z"/>',
    "pf-unite": '<path d="M1 1h9v5h5v9H6v-5H1z"/>',
    "pf-minus": '<path d="M1 1h9v4H5v5H1z"/><path class="s" d="M6 6h8.500v8.500H6z" style="stroke-width:1"/>',
    "pf-intersect": '<path class="s" d="M1.500 1.500h9v9h-9zM5.500 5.500h9v9h-9z" style="stroke-width:1"/><path d="M5 5h6v6H5z"/>',
    "pf-exclude": '<path fill-rule="evenodd" d="M1 1h10v4h4v10H5v-4H1zM5 5v6h6V5z"/>',
    "pf-divide": '<path d="M0 0h11v3.500H3.500V11H0zM5 5h6v6H5zM16 5v11H5v-3.500h7.500V5z"/>',
    "pf-trim": '<path d="M0 0h11v3.500H3.500V11H0zM5 5h11v11H5z"/>',
    "pf-merge": '<path d="M0 0h11v5h5v11H5v-4.500H0z"/><path d="M5 5v6" stroke="#303030"/>',
    "pf-crop": '<path class="s" d="M10 .5H.5V11H4" style="stroke-width:1;opacity:.6"/><path class="s" d="M12 5h3.500v10.500H5V12" style="stroke-width:1"/><path d="M5 5h6v6H5z"/>',
    "pf-outline": '<path class="s" d="M.5.5h10v10H.5zM5.500 5.500h10v10h-10z" style="stroke-width:1.200"/>',
    "pf-back": '<path d="M12 5h4v11H5v-4h7z"/><path class="s" d="M.7.7h10v10H.7z"/>',
    "crown": '<path d="M0 1l4 3 3-1 3-3 3 3 3 1 4-3-3 10H3z"/>',
    "bars": '<path d="M0 0h16v3H0zM0 6.500h16v3H0zM0 13h16v3H0z"/>',
    "img-link": '<path d="M0 1h11v14H0z" fill="#777"/><path d="M0 9l4-4 7 4v6H0z" fill="#333"/><path class="s" d="M6 8h4v3H6zM11 8h5v3h-5" style="stroke-width:1;stroke:#9bb0b5"/>',
    "img-edit": '<path d="M0 1h11v14H0z" fill="#777"/><path d="M0 9l4-4 6 4-3 6H0z" fill="#333"/><path class="s" d="M6 14 16 3"/>',
    "img-turn": '<path d="M0 1h11v14H0z" fill="#777"/><path d="M0 9l4-4 7 4v6H0z" fill="#333"/><path class="s" d="M9 6h3a3 3 0 1 1-3 5M11 3 8 6l3 2" style="stroke:#9bb0b5"/>',
    "img-crop": '<path d="M3 4h10v9H3z" fill="#888"/><path d="M3 11l4-3 6 3v2H3z" fill="#333"/><path class="s" d="M1.500 1.500h13v13h-13z" stroke-dasharray="1.500 1" style="stroke-width:1;stroke:#9bb0b5"/>',
    "img-split": '<path d="M0 1h8v14H0z" fill="#888"/><path d="M0 9l4-4 4 3v7H0z" fill="#333"/><path d="M8 1h7v14H8z" fill="#35474f"/><path d="M8 0v16" stroke="#aaa" stroke-dasharray="1 1"/>',
    "cap-butt": '<path d="M5 1h10v14H5v-5H2V6h3z"/><path d="M5 8h6" stroke="#111" stroke-width="1.400"/><circle cx="5" cy="8" r="1.700" fill="#111"/>',
    "cap-round": '<path d="M15 1H8a7 7 0 0 0 0 14h7z"/><path d="M8 8h7" stroke="#303030" stroke-width="1.400"/><circle cx="8" cy="8" r="1.700" fill="#303030"/>',
    "cap-square": '<path d="M1 1h14v14H1z"/><path d="M8 8h7" stroke="#303030" stroke-width="1.400"/><circle cx="8" cy="8" r="1.700" fill="#303030"/>',
    "join-miter": '<path d="M0 0h16v10h-5v6H0z"/><path d="M7 16V7h9" fill="none" stroke="#111" stroke-width="1.400"/><circle cx="7" cy="7" r="1.700" fill="#111"/>',
    "join-round": '<path d="M16 0H10A10 10 0 0 0 0 10v6h11v-6h5z"/><path d="M7 16V7h9" fill="none" stroke="#303030" stroke-width="1.400"/><circle cx="7" cy="7" r="1.700" fill="#303030"/>',
    "join-bevel": '<path d="M16 0H9L0 9v7h11v-6h5z"/><path d="M7 16V7h9" fill="none" stroke="#303030" stroke-width="1.400"/><circle cx="7" cy="7" r="1.700" fill="#303030"/>',
    "al-center": '<path d="M0 0h3v13h13v3H0zM5 0h5v6h6v5H5z"/><circle cx="4" cy="12" r="1.700" fill="#111"/>',
    "al-inside": '<path class="s" d="M2 13.500h14M3 13V0" style="stroke-width:1.200"/><path d="M5 0h4v8h7v4H5z"/><circle class="s" cx="3" cy="13.500" r="2" style="stroke-width:1"/>',
    "al-outside": '<path d="M0 0h6v10h10v6H0z"/><path class="s" d="M9 0v7h7" style="stroke-width:1.500"/><circle cx="7" cy="9" r="1.700" fill="#303030"/>',
    "dash-a": '<path class="s" d="M1 5V1h5M10 1h7M21 1h7v5M1 9v5h4M9 14h7M20 14h6" style="stroke-width:2"/>',
    "dash-b": '<path class="s" d="M1 5V1h5M11 1h9M25 1h5v4M1 10v4h5M11 14h9M25 14h5v-4" style="stroke-width:2"/>',
    "swap": '<path d="M3 4h8V1l5 4-5 4V6H3zM13 10H5V8l-5 4 5 4v-3h8z"/>',
    "tip-a": '<path d="M0 3h8v1.500H0zM0 9h9V5l7 5-7 5v-4H0z"/>',
    "tip-b": '<path d="M0 3h16v1.500H0zM0 9h9V5l7 5-7 5v-4H0z"/>',
    "flip-h": '<path class="s" d="M1 3v10l5-5z" style="stroke-width:1"/><path d="M15 3v10l-5-5zM7.500 0h1v3h-1zM7.500 5h1v3h-1zM7.500 10h1v3h-1z"/>',
    "flip-v": '<path d="M3 1h10L8 6z"/><path class="s" d="M3 14.500h10L8 10z" style="stroke-width:1"/><path d="M0 7.500h3v1H0zM5 7.500h3v1H5zM10 7.500h3v1h-3z"/>',
    "funnel": '<path d="M0 1h16L10.500 8v5l-4 3V8z"/>',
    "ring": '<circle class="s" cx="8" cy="8" r="6.500" style="stroke-width:2"/>',
    "export": '<path class="s" d="M7 3H1v12h12V9M6 10l8-8M10 1h5v5"/>',
    "clip": '<path class="s" d="M1 1h10v10H1z"/><path class="s" d="M11 6h4v9H6v-4" style="opacity:.6"/><path d="M5 5h6v6H5z"/>',
    "sublayer": '<path class="s" d="M6 4h9v10H6zM10.500 6.500v5M8 9h5M1 2v5h3M3 5l2 2-2 2" style="stroke-width:1.300"/>',
    "cmyk": '<path d="M0 0h16v16H0z" fill="#777"/><path d="M2 2h12L8 8z" fill="#9c117d"/><path d="M14 2v12L8 8z" fill="#a8a11b"/><path d="M2 14h12L8 8z" fill="#111"/><path d="M2 2v12l6-6z" fill="#1b8f9b"/>',
    "rows": '<path d="M2 1h12v2H2zM2 5h12v2H2zM2 9h12v2H2zM2 13h12v2H2z"/>',
    "tiles": '<path d="M1 1h4v4H1zM6 1h4v4H6zM11 1h4v4h-4zM1 6h4v4H1zM6 6h4v4H6zM11 6h4v4h-4zM1 11h4v4H1zM6 11h4v4H6zM11 11h4v4h-4z"/>',
    "library": '<path d="M0 2h2v12H0zM4 2h2v12H4zM7 3l2-1 4 11-2 1zM13.500 13h2.500l-1.200 2z"/>',
    "add-library": '<path class="s" d="M3 7V3h2M5 1h10v9h-5M12 10v4H9M8 1v5h4V1M0 11h6M4 8l3 3-3 3" style="stroke-width:1.800"/>',
    "kinds": '<path d="M1 3h3v3H1zM5 3h3v3H5zM9 3h3v3H9zM1 7h3v3H1zM9 7h3v3H9zM1 11h3v3H1zM5 11h3v3H5z"/><path d="M5 7h3v3H5zM9 11h3v3H9z" opacity=".5"/><path d="M13.500 13h2.500l-1.200 2z"/>',
    "options": '<path class="s" d="M1 1h14v14H1z"/><path d="M1 1h14v3H1zM3 6h2v1.500H3zM6 6h7v1.500H6zM3 9h2v1.500H3zM6 9h7v1.500H6zM3 12h2v1.500H3zM6 12h7v1.500H6z"/>',
    "folder": '<path d="M0 2h6l2 3h8v9H0z"/>',
    "plane": '<path d="M15.500.5q-2 0-3.500 1.500L9.500 4.500 2 3 1 4l6 3-3 4H1l-.5 1L4 13l1 3 1-.5V13l3-3 3 6 1-1-1.500-7.500L14 5q1.500-2 1.500-4.500z"/>',
    "proxy": '<path d="M4 4h7v7H4z" fill="#000" stroke="#ccc"/><path d="M1 1h6v6H1z" fill="#fff" stroke="#111"/><path d="M23 4h2q4 0 4 5" fill="none" stroke="currentColor" stroke-width="2"/><path d="M20 4l5-3v7zM25 8h8l-4 5z"/><path d="M12 30h17v17H12z" fill="#000" stroke="#fff"/><path d="M16 34h9v9h-9z" fill="#303030" stroke="#fff"/><path d="M.5 19.500h18v18H.5z" fill="#fff" stroke="#111"/>',
    "proxy-small": '<path d="M11 11h17v17H11z" fill="#000" stroke="#fff"/><path d="M15 15h9v9h-9z" fill="#303030" stroke="#fff"/><path d="M.5.5h18v18H.5z" fill="#fff" stroke="#111"/>'
  };

  const BOXES = {
    "crown": "0 0 20 12",
    "dash-a": "0 -8 32 32",
    "dash-b": "0 -8 32 32",
    "proxy": "0 0 32 48",
    "proxy-small": "0 0 32 32"
  };

  // Tool glyphs on a 30 x 24 grid. A leading "+" adds the fly-out mark.
  const NIB = '<path d="M7 20q1-8 5-12l5 5q-3 5-10 7zM13 7l4-4 6 6-4 4z"/><path d="M8 19l5-6" stroke="#303030"/>';
  const TOOLS = [
    '+<path class="s" d="M10 4v14l4-4h6z"/>',
    '+<path d="M10 4v15l4-4h8z"/>',
    '<path d="M10 4v16l5-4h7z" fill="#26c6ff"/>',
    '<circle cx="15" cy="12" r="7" fill="#26c6ff"/>',
    '<path class="s" d="M13 13a3.500 3 0 1 0-4 2q3 4 6 4M7 10q1-5 8-5t8 6"/><path d="M15 7v13l3-3h7z"/>',
    '<path class="s" d="M8 20 18 10" style="stroke-width:3"/><path d="M11 4l1 2 2 1-2 1-1 2-1-2-2-1 2-1zM19 3l1 2 2 1-2 1-1 2-1-2-2-1 2-1zM21 11l1 2 2 1-2 1-1 2-1-2-2-1 2-1z"/>',
    '<path class="s" d="M6 5q4 4 1 8-2 5 3 7"/><g transform="translate(2)">' + NIB + "</g>",
    "+" + NIB,
    '<path d="M4 7h8v2H4zM7 4h2v8H7z"/><g transform="translate(2)">' + NIB + "</g>",
    '<path d="M4 7h8v2H4z"/><g transform="translate(2)">' + NIB + "</g>",
    '+<path d="M7 5q8-3 16 0-1 8-3 14h-10Q8 13 7 5z" fill="#4c4c4c" stroke="currentColor" stroke-width="1.500"/><path d="M10 7h10v4h-2V9h-2v8h1v1h-4v-1h1V9h-2v2h-2z"/>',
    '<path d="M8 5h14v5h-2V7h-4v10h3v2h-8v-2h3V7h-4v3H8z"/>',
    '+<path class="s" d="M8 19 22 5"/>',
    '+<path d="M7.500 5.500h15v13h-15z" fill="#4c4c4c" stroke="currentColor"/>',
    '+<path d="M23 3 14 11l3 3q5-6 6-11zM13 12l3 3q-2 5-9 5 3-2 3-5t3-3z"/>',
    '+<circle cx="12" cy="11" r="6" fill="#4c4c4c" stroke="currentColor" stroke-width="1.500"/><path d="M24 5l2 2-12 11-4 1 1-3z"/>',
    '<path d="M23 4q2 3-3 6l1 1-2 2-6-6 2-2 1 1q4-5 7-2z"/><path class="s" d="M14 9l-6 7-1 4 4-2 6-6"/>',
    '+<path d="M16 3l8 7-8 10-8-7z"/><path d="M10 12l6 5" stroke="#303030" stroke-width="1.500"/>',
    '<path d="M7 4h16v16H7z" fill="#8c8c8c"/><path d="M6 7h18M6 17h18M10 3v18M20 3v18M15 3v3M15 18v3" stroke="#f4eedc" stroke-width="1.500"/><path d="M10 11l5-3 5 2-2 4-4 1z" fill="#d8dcf0"/><path d="M11 16q4-3 8 0l-2 3h-4z" fill="#1a1a1a"/>',
    '+<path class="s" d="M9 8q6-6 11-1t1 10"/><path class="s" d="M8 13q1 7 9 7l4-2" stroke-dasharray="1.500 1.500"/><path d="M7 3v8h7z"/>',
    '+<path class="s" d="M12 4h12v11H12zM6 12h9v8H6zM17 11l4-4M18 7h3v3" style="stroke-width:1.200"/>',
    '+<path class="s" d="M8 19q4-2 3-6T8 5M10 16q6 3 8-3M21 11q4 2 2 6M6 19h4" style="stroke-width:2"/><path d="M8 4l5 3 3 4 6-4 2 2-3 6-4 2-5-2z"/><circle cx="14" cy="13" r="2" fill="#303030"/>',
    '<path class="s" d="M7 9h7l-1 10H7zM9 5h9M16 3l2 2-2 2" style="stroke-width:1"/><path d="M15 8h9l-4 12h-8z"/>',
    '<circle class="s" cx="11" cy="11" r="5"/><circle class="s" cx="17" cy="10" r="6"/><path class="s" d="M9 11h9" stroke-dasharray="1.500 1.500"/><path d="M17 8v13l3-3h6z"/>',
    '+<path class="s" d="M11 6h13v13H9v-5" style="stroke-width:1"/><path d="M6 3v12l3-3h6z"/><path d="M22 4h3v3h-3zM22 17h3v3h-3zM8 17h3v3H8zM15 4h2v3h-2zM15 17h2v3h-2z"/>',
    '+<path d="M6 9l5-5 6 6-6 5z"/><path class="s" d="M13 11h6v6h-6zM18 7h6v10h-5M9 3v5" style="stroke-width:1.200"/>',
    '<path class="s" d="M7.500 4.500h15v15h-15zM8 11q8-3 6 8M11 5q4 7 12 5M14 13l8-8M14 15l8 3" style="stroke-width:1"/>',
    '<linearGradient id="ramp"><stop stop-color="#383838"/><stop offset="1" stop-color="#e4e4e4"/></linearGradient><path d="M7.500 4.500h15v15h-15z" fill="url(#ramp)" stroke="#b4b4b4"/>',
    '<path d="M19 4l4 4L11 20l-4-4z"/><path d="M17 7l2 2M14 10l2 2M11 13l2 2" stroke="#303030"/>',
    '<path d="M6 5h7v7H6z"/><path d="M11 8h6v6h-6z" fill="#777" stroke="currentColor"/><circle cx="20" cy="14" r="4" fill="#4c4c4c" stroke="currentColor" stroke-width="1.500"/>',
    '+<circle class="s" cx="8" cy="13" r="2.500"/><circle class="s" cx="13" cy="16" r="3"/><circle class="s" cx="21" cy="14" r="3"/><circle cx="13" cy="16" r="1.500"/><circle cx="21" cy="14" r="1.500"/><path d="M12 5h4v4zM19 5h4l-3 4z"/>',
    '+<path class="s" d="M6.500 4v15.500H24" style="stroke-width:1"/><path d="M10 12h3v6h-3zM15 5h3v13h-3zM20 8h3v10h-3z"/>',
    '<path d="M12 3h6l-2 6h3l-7 12 2-9h-4z" fill="#d8d8d8"/>',
    '+<path d="M25 3 15 12l2 3 9-9zM14 13l3 3-4 4H8z" fill="#eee"/><path class="s" d="M7 6q3-4 4 1t-2 10q6 4 15 0" style="stroke:#eee"/>',
    '+<path class="s" d="M8 5q2 4-1 6-1 7 7 7t10-4l-9-5q-3 2-7-4z"/><path d="M22 12h4v4h-4z" fill="#000"/><path d="M5 2h4v3H5zM14 7h4v3h-4z" fill="#eee"/>',
    '<path class="s" d="M8 19q6 0 6-8t8-7"/><path d="M20 2h4v3h-4zM6 17h4v3H6z" fill="#eee"/><path class="s" d="M10 15q-1-9 8-10" stroke-dasharray="1 1"/><path d="M17 10v10l2-2h5z"/>',
    '<path class="s" d="M8 19q-2-15 14-15" stroke-dasharray="1.500 1.500"/><path class="s" d="M8 19l4-6 4-2 3-4 4-3" style="stroke-width:1"/><path d="M21 2h3v3h-3zM6 18h3v3H6z" fill="#eee"/><path d="M17 10v10l2-2h5z"/>',
    '+<circle class="s" cx="15" cy="12" r="6"/><path d="M13 4h4v3h-4zM8 14h3v3H8zM20 14h3v3h-3z" fill="#c8d0a8"/>',
    '+<circle class="s" cx="8" cy="13" r="5" style="stroke-width:1.200"/><circle class="s" cx="22" cy="13" r="5" style="stroke-width:1.200"/><path class="s" d="M8 7h14"/><path d="M7 5h3v3H7zM20 5h3v3h-3z" fill="#eee"/>',
    '+<path class="s" d="M5 16h6q4 0 5-4t8-5"/><path d="M8 14h4v4H8zM18 6h4v4h-4z" fill="#c8d0a8"/>',
    '+<path d="M8 12h6v6H8zM19 4l4 4-4 4-4-4z" fill="#eee"/><path class="s" d="M6 6v13h12M12 9l7 8 6-8" style="stroke-width:1"/>',
    '<rect x="7" y="4" width="16" height="16" rx="3" fill="#c8c8c8"/><g fill="#111"><circle cx="11" cy="8" r="1.800"/><circle cx="19" cy="8" r="1.800"/><circle cx="15" cy="12" r="1.800"/><circle cx="11" cy="16" r="1.800"/><circle cx="19" cy="16" r="1.800"/></g>',
    '<rect x="7" y="6" width="17" height="12" fill="#4c4c4c" stroke="#b4b4b4"/><path d="M5 4h4v4H5zM21 4h4v4h-4zM5 16h4v4H5zM21 16h4v4h-4zM14 8h3v2h-3zM14 14h3v2h-3zM11 11h2v2h-2zM18 11h2v2h-2z" fill="#eee"/>',
    '<path d="M8 19q1-11 14-13v13z" fill="#555"/><path class="s" d="M7 19Q8 6 22 6"/><path d="M21 4h4v4h-4zM5 17h4v4H5zM11 8h5v2l3 3-3 2-2-3z" fill="#eee"/>',
    '+<path d="M9 19q1-11 13-13v13z" fill="#555"/><path class="s" d="M7 19Q8 6 22 6"/><path d="M21 3h4v4h-4zM5 17h4v4H5z" fill="#eee"/><path d="M15 7v11" stroke="#fff" stroke-width="2"/><path d="M16 7l6 8" stroke="#ccc"/>',
    '<path d="M5.500 5.500h19v13h-19z" fill="#77736a" stroke="#e4dcc4"/><path d="M8 6v4M10.500 6v3M13 6v6M15.500 6v3M18 6v4M20.500 6v6M12.500 14v3M19 14h3l-3 3h3" stroke="#fff" fill="none"/>',
    '<path d="M10.500 7.500h12v11h-12z" fill="#4c4c4c" stroke="#b4b4b4"/><path d="M5 7h6v1.500H5zM10 2h1.500v6H10z"/>',
    '+<path class="s" d="M7 20l4-9 6-5 4 4-5 6z"/><path d="M17 3l6 6-2 3-7-6z"/>',
    '+<path d="M11 20 7 13l1-1 3 2-1-9h2l1 6V3h2l1 8 2-7h2l-1 8 3-3 1 2-4 9z"/>',
    '<circle class="s" cx="13" cy="10" r="5.500"/><path class="s" d="M17 14l6 6" style="stroke-width:2.500"/>'
  ];

  const SWATCHES = [
    "none reg white #000 #e60012 #f8e800 #1a9c39 #00a2ff #132a8c #e60a7d #cd171e #e7292c #ea5514 #f08a10",
    "#f8b42a #f8e800 #d8dc0c #9cc828 #1a9c39 #1a9c39 #12602f #0c9e66 #0ea396 #2aace8 #267cc4 #132a8c #181c60 #601888",
    "#981082 #a80a58 #d8004c #e60a7d #cab298 #a8906a #746a50 #6e564c #dca268 #a8744c #924e4c #925014 #80301c #2c300e",
    "g1 g2 g3 g4 g5 g6",
    "folder #000 #303030 #4c4c4c #707070 #8e8e8e #94a6ac #b0b0b0 #d2d2d2 #d2d2d2 #fff #fff",
    "folder #e60012 #ec6a04 #f8e800 #1a9c39 #132a8c #7a2e90"
  ];

  function defineTemplate(name, setup) {
    customElements.define(
      name,
      class extends HTMLElement {
        connectedCallback() {
          if (this.shadowRoot) {
            return;
          }
          const template = document.querySelector(`#${name}-template`);
          this.attachShadow({ mode: "open" });
          this.shadowRoot.appendChild(template.content.cloneNode(true));
          if (setup) {
            setup(this, this.shadowRoot);
          }
        }
      }
    );
  }

  function defineMarkup(name, render) {
    customElements.define(
      name,
      class extends HTMLElement {
        connectedCallback() {
          if (this.shadowRoot) {
            return;
          }
          this.attachShadow({ mode: "open" });
          this.shadowRoot.innerHTML = render(this);
        }
      }
    );
  }

  defineMarkup("ui-icon", (el) => {
    const name = el.getAttribute("name");
    const size = el.getAttribute("size") || 16;
    const tall = el.getAttribute("tall") || size;
    return `<style>
        :host { display: inline-block; flex: none; width: ${size}px; height: ${tall}px; line-height: 0; }
        svg { fill: currentColor; overflow: visible; }
        .s { fill: none; stroke: currentColor; stroke-width: 1.5; }
      </style>
      <svg width="${size}" height="${tall}" viewBox="${BOXES[name] || "0 0 16 16"}" aria-hidden="true">${ICONS[name]}</svg>`;
  });

  defineMarkup("check-field", (el) => `<style>
      :host { display: block; height: 20px; color: #e0e0e0; }
      :host([disabled]) { color: #585858; }
      label { display: flex; align-items: center; gap: 5px; line-height: 20px; white-space: nowrap; }
      input { appearance: none; box-sizing: border-box; width: 12px; height: 12px; margin: 0 0 0 1px; border: 1px solid #999; border-radius: 1px; }
      :host([disabled]) input { border-color: #585858; }
    </style>
    <label><input type="checkbox" ${el.hasAttribute("disabled") ? "disabled" : ""}><slot></slot></label>`);

  defineMarkup("swatch-button", (el) => `<style>
      :host { display: block; width: 39px; margin-right: 5px; }
      button { display: flex; align-items: center; box-sizing: border-box; width: 100%; height: 21px; padding: 0; border: 1px solid var(--line); border-radius: 2px; background: none; color: #d8d8d8; }
      i { display: flex; align-items: center; justify-content: center; box-sizing: border-box; width: 20px; height: 100%; background: ${el.getAttribute("color")}; border: 1px solid #f0e6d0; }
      i.ring::before { content: ""; width: 3px; height: 3px; border: 1px solid #000; background: #fff; box-shadow: 0 0 0 1px #fff; }
      ui-icon { margin: 0 auto; }
    </style>
    <button aria-label="颜色"><i class="${el.hasAttribute("ring") ? "ring" : ""}"></i><ui-icon name="chevron" size="8"></ui-icon></button>`);

  defineMarkup("num-box", (el) => {
    const has = (key) => el.hasAttribute(key);
    return `<style>
        :host { display: block; }
        .box { display: flex; align-items: stretch; box-sizing: border-box; height: 21px; border: 1px solid var(--line); border-radius: 2px; }
        input { flex: 1; min-width: 0; width: 10px; padding: 0 0 1px 3px; border: 0; background: none; color: #dcdcdc; font: 12px/18px var(--mono); }
        button { box-sizing: border-box; width: 17px; padding: 0; border: 0; background: none; color: #d0d0d0; line-height: 0; }
        .spin { border-right: 1px solid var(--line); display: flex; flex-direction: column; align-items: center; justify-content: space-evenly; }
        .drop { border-left: 1px solid var(--line); }
        .up { transform: rotate(180deg); }
      </style>
      <div class="box">
        ${has("spin") ? '<button class="spin" aria-label="增减"><ui-icon class="up" name="chevron" size="8"></ui-icon><ui-icon name="chevron" size="8"></ui-icon></button>' : ""}
        <input value="${el.getAttribute("value")}" aria-label="${el.getAttribute("label")}">
        ${has("drop") ? '<button class="drop" aria-label="打开列表"><ui-icon name="chevron" size="8"></ui-icon></button>' : ""}
        ${has("next") ? '<button class="drop" aria-label="打开滑块"><ui-icon name="chevron-right" size="8"></ui-icon></button>' : ""}
      </div>`;
  });

  defineMarkup("pick-list", (el) => {
    const kind = el.getAttribute("kind");
    const art = {
      line: "linear-gradient(#000, #000) 6px 50% / calc(100% - 59px) 3px no-repeat",
      arrow: "linear-gradient(#000, #000) 5px 50% / 27px 3px no-repeat",
      dot: "radial-gradient(circle at 5px 5px, #000 3px, transparent 4px) 5px 4px / 10px 10px no-repeat"
    };
    return `<style>
        :host { display: block; }
        label { display: flex; align-items: center; position: relative; color: #d8d8d8; }
        select { appearance: none; box-sizing: border-box; width: 100%; height: 21px; padding: 0 ${kind === "dot" ? 32 : 23}px 1px 20px; border: 1px solid var(--line); border-radius: 2px;
          background: ${art[kind]}, linear-gradient(270deg, var(--bg) 17px, var(--line) 17px 18px, var(--cream) 18px); color: #222; font: 12px/18px var(--mono); text-align: right; text-align-last: right; }
        ui-icon { position: absolute; right: 5px; }
      </style>
      <label><select aria-label="${el.getAttribute("label")}"><option>${el.getAttribute("value")}</option></select><ui-icon name="chevron" size="8"></ui-icon></label>`;
  });

  defineMarkup("icon-group", (el) => {
    const on = el.getAttribute("on");
    const size = el.getAttribute("size");
    const buttons = el.getAttribute("icons").split(",").map((name, i) =>
      `<button aria-label="${name}" class="${on === String(i) ? "on" : ""}"><ui-icon name="${name}" size="${size}"></ui-icon></button>`);
    return `<style>
        :host { display: flex; border: 1px solid var(--line); border-radius: 2px; }
        button { display: flex; align-items: center; justify-content: center; box-sizing: border-box; width: ${el.getAttribute("cell")}px; height: ${size === "17" ? 22 : 20}px; padding: 0; border: 0; background: none; color: inherit; }
        button + button { border-left: 1px solid var(--line); }
        .on { background: #181818; color: #fff; }
      </style>${buttons.join("")}`;
  });

  defineMarkup("action-row", (el) => {
    const tones = { orange: "#925014", blue: "#484f83", red: "#8b2c30", green: "#4a5833" };
    return `<style>
        :host { display: block; background: ${tones[el.getAttribute("tone")]}; }
        button { display: flex; justify-content: space-between; width: 100%; height: 20px; padding: 0 3px; border: 0; background: none; color: #f0e8dc; font: 12px/20px "Noto Sans CJK SC", sans-serif; white-space: nowrap; }
      </style>
      <button><span><slot></slot></span><span>${el.getAttribute("key") || ""}</span></button>`;
  });

  defineMarkup("ink-slider", (el) => `<style>
      :host { display: flex; align-items: center; height: 25px; }
      label { width: 13px; color: #9a9a9a; }
      input[type="range"] { appearance: none; flex: 1; width: 10px; min-width: 0; height: 18px; margin: 2px 3px 0 0; background: linear-gradient(90deg, transparent 5px, #fff 5px 15%, ${el.getAttribute("tone")}) 0 4px / 100% 4px no-repeat; }
      input::-webkit-slider-thumb { appearance: none; width: 10px; height: 9px; margin-top: 8px; background: #b4b4b4; clip-path: polygon(50% 0, 100% 50%, 100% 100%, 0 100%, 0 50%); }
      num-box { width: 36px; margin: 0 2px 0 4px; }
    </style>
    <label for="ink">${el.getAttribute("name")}</label>
    <input id="ink" type="range" min="0" max="100" value="0">
    <num-box value="0" label="${el.getAttribute("name")}"></num-box>
    <span>%</span>`);

  defineMarkup("swatch-well", () => {
    const art = {
      none: '<path d="M0 0h13v13H0z" fill="#fff"/><path d="M1 12 12 1" stroke="#e60012" stroke-width="2"/>',
      reg: '<path d="M0 0h13v13H0z" fill="#fff"/><g fill="none" stroke="#555"><circle cx="6.500" cy="6.500" r="4.500"/><circle cx="6.500" cy="6.500" r="1.500"/><path d="M6.500 0v13M0 6.500h13"/></g>',
      white: '<path d="M0 0h13v13H0z" fill="#fff"/><path d="M1.500 1.500h10v10h-10z" fill="none" stroke="#000"/>',
      g1: '<path d="M0 0h13v13H0z" fill="url(#w1)"/>',
      g2: '<path d="M0 0h13v13H0z" fill="url(#w2)"/>',
      g3: '<path d="M0 0h13v13H0z" fill="url(#w3)"/>',
      g4: '<path d="M0 0h13v13H0z"/><circle cx="6.500" cy="6.500" r="5" fill="#888"/><circle cx="6.500" cy="6.500" r="4" fill="#fff"/>',
      g5: '<path d="M0 0h13v13H0z" fill="#64b32c"/><path d="M3 0h7l-3 3zM3 13h7l-3-3z" fill="#fff"/><circle cx="6.500" cy="6.500" r="4" fill="#e8e010"/><circle cx="6.500" cy="6.500" r="2" fill="#64b32c"/>',
      g6: '<path d="M0 0h13v13H0z" fill="#a8794f"/><path d="M1 2h3M6 1l3 2M2 5l3 2M8 6h4M1 9l3 2M6 9l2 3M10 10l2 2M10 2l2 1" stroke="#e6d3bb"/>',
      folder: '<path d="M1 3h4l2 3h5v6H1z" fill="#b4b4b4"/>'
    };
    const tops = [0, 14, 28, 42, 58, 74];
    const cells = SWATCHES.map((row, r) => row.split(" ").map((c, i) =>
      `<g transform="translate(${i * 14} ${tops[r]})">${art[c] || `<path d="M0 0h13v13H0z" fill="${c}"/>`}</g>`).join(""));
    return `<style>:host { display: block; }</style>
      <svg width="196" height="90">
        <linearGradient id="w1"><stop stop-color="#fff"/><stop offset="1" stop-color="#333"/></linearGradient>
        <linearGradient id="w2"><stop stop-color="#f8e800"/><stop offset="1" stop-color="#e8641c"/></linearGradient>
        <linearGradient id="w3"><stop stop-color="#267cc4"/><stop offset="1" stop-color="#d8eefa"/></linearGradient>
        ${cells.join("")}
      </svg>`;
  });

  defineMarkup("script-tile", (el) => {
    const art = {
      arcs: '<path d="M0 4q16 0 21 8l11 10v18" fill="none" stroke="#e7292c" stroke-width="6"/><path d="M0 15q18 0 24 14v11" fill="none" stroke="#222" stroke-width="2"/><path d="M0 27h24" stroke="#222" stroke-width="2"/>',
      star: '<path d="M31 14l4 9h10l-7 6 1 10H19l3-7-8-7 11-1z" fill="#fff"/>',
      frame: '<path d="M1.500 1.500h36v36h-36z" fill="none" stroke="#b48c10"/>',
      swirl: '<path d="M11 15q6-4 5 2t-6 3q0 4 6 1M20 12q6-2 4 4M18 18q6 4 8-4" fill="none" stroke="#b0b8b8" stroke-width="2" opacity=".8"/>'
    };
    const kind = el.getAttribute("art");
    return `<style>
        :host { display: block; }
        button { position: relative; display: block; width: 39px; height: 39px; padding: 1px 0; border: 0; background: var(--tile); color: var(--ink, #fff); font: 500 16px/18px "Liberation Sans", "Noto Sans CJK SC", sans-serif; text-align: center; overflow: hidden; white-space: nowrap; }
        svg { position: absolute; left: 0; top: 0; }
      </style>
      <button><slot></slot>${kind ? `<svg width="39" height="39" aria-hidden="true">${art[kind]}</svg>` : ""}</button>`;
  });

  // A major tick stands every 50 units (122px), with a minor one every 5.
  function drawRuler(el, length) {
    const across = el.getAttribute("axis") === "x";
    const start = Number(el.getAttribute("start"));
    const offset = Number(el.getAttribute("offset"));
    const mark = Number(el.getAttribute("mark"));
    let ticks = "";
    let labels = "";
    for (let k = -7; ; k++) {
      const at = Math.round(offset + k * 12.2) + 0.5;
      if (at > length) {
        break;
      }
      if (at < 0) {
        continue;
      }
      const size = k % 10 === 0 ? 16 : k % 2 ? 4 : 5;
      ticks += across ? `M${at} 17v-${size}` : `M16 ${at}h-${size}`;
      if (k % 10 === 0) {
        const value = String(start + k * 5);
        labels += across
          ? `<text x="${at + 2}" y="15">${value}</text>`
          : [...value].map((d, i) => `<text x="1" y="${at - 29 + i * 12}">${d}</text>`).join("");
      }
    }
    const guide = across ? `M${mark}.5 0v17` : `M0 ${mark}.5h16`;
    el.shadowRoot.innerHTML = `<style>
        :host { display: block; overflow: hidden; background: var(--dark); line-height: 0; min-width: 0; min-height: 0; }
        svg { position: absolute; }
        path { stroke: #4d6b58; fill: none; }
        text { fill: #9db59a; font: 11px "Liberation Sans", sans-serif; }
      </style>
      <svg width="${across ? length : 16}" height="${across ? 17 : length}"><path d="${ticks}"/><path d="${guide}" stroke-dasharray="1 1"/>${labels}</svg>`;
  }

  customElements.define(
    "ruler-strip",
    class extends HTMLElement {
      connectedCallback() {
        if (this.shadowRoot) {
          return;
        }
        this.attachShadow({ mode: "open" });
        drawRuler(this, 0);
        const across = this.getAttribute("axis") === "x";
        new ResizeObserver(() => {
          drawRuler(this, across ? this.clientWidth : this.clientHeight);
        }).observe(this);
      }
    }
  );

  defineTemplate("dock-panel", (el, root) => {
    const active = Number(el.getAttribute("active"));
    const bar = root.querySelector(".tabs");
    el.getAttribute("tabs").split(",").forEach((text, i) => {
      const button = document.createElement("button");
      if (i === 0 && el.hasAttribute("toggle")) {
        button.className = "toggle";
        button.innerHTML = '<ui-icon name="updown" size="8"></ui-icon>';
      }
      button.append(text);
      button.classList.toggle("on", i === active);
      bar.append(button);
    });
    const rest = document.createElement("span");
    rest.className = "rest";
    if (el.hasAttribute("menu")) {
      rest.innerHTML = '<ui-icon name="menu" size="10"></ui-icon>';
    }
    bar.append(rest);
  });

  defineTemplate("tool-box", (el, root) => {
    const mark = '<path d="M28 19v3h-3z"/>';
    root.querySelector(".tools").innerHTML = TOOLS.map((glyph, i) => {
      const more = glyph.startsWith("+");
      const body = more ? glyph.slice(1) + mark : glyph;
      return `<button aria-label="工具" class="${i === 0 ? "on" : ""}"><svg viewBox="0 0 30 24">${body}</svg></button>`;
    }).join("");
  });

  ["menu-bar", "options-bar", "left-dock", "document-view", "stroke-dock", "color-dock", "app-window"]
    .forEach((name) => defineTemplate(name));
</script>

<app-window></app-window>
</body>
</html>
